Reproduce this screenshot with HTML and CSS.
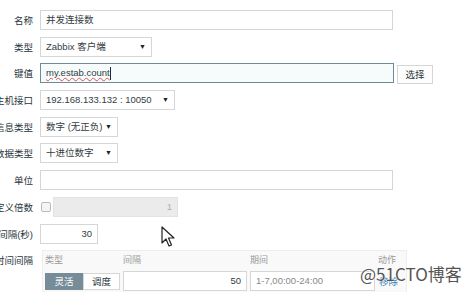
FILE: index.html
```html
<!DOCTYPE html>
<html lang="zh-CN">
<head>
  <meta charset="UTF-8">
  <title>监控项</title>
  <link rel="stylesheet" href="styles.css">
</head>
<body>
  <div class="form">
    <div class="row">
      <div class="label"><span>名称</span></div>
      <div class="input w-full">并发连接数</div>
    </div>
    <div class="row">
      <div class="label"><span>类型</span></div>
      <div class="input select w-type">Zabbix 客户端<span class="arrow">▼</span></div>
    </div>
    <div class="row">
      <div class="label"><span>键值</span></div>
      <div class="input focused w-key"><span class="typo">my.estab.count</span><span class="caret"></span></div>
      <div class="btn">选择</div>
    </div>
    <div class="row">
      <div class="label"><span>主机接口</span></div>
      <div class="input select w-host">192.168.133.132 : 10050<span class="arrow">▼</span></div>
    </div>
    <div class="row">
      <div class="label"><span>信息类型</span></div>
      <div class="input select w-small">数字 (无正负)<span class="arrow">▼</span></div>
    </div>
    <div class="row">
      <div class="label"><span>数据类型</span></div>
      <div class="input select w-small">十进位数字<span class="arrow">▼</span></div>
    </div>
    <div class="row">
      <div class="label"><span>单位</span></div>
      <div class="input w-full"></div>
    </div>
    <div class="row">
      <div class="label"><span>自定义倍数</span></div>
      <div class="checkbox"></div>
      <div class="input disabled w-mult">1</div>
    </div>
    <div class="row">
      <div class="label"><span>更新间隔(秒)</span></div>
      <div class="input num w-int">30</div>
    </div>
    <div class="row top">
      <div class="label"><span>自定义时间间隔</span></div>
      <div class="intervals">
        <div class="int-head">
          <span class="col-type">类型</span>
          <span class="col-int">间隔</span>
          <span class="col-period">期间</span>
          <span class="col-act">动作</span>
        </div>
        <div class="int-row">
          <div class="toggle">
            <span class="on">灵活</span><span>调度</span>
          </div>
          <div class="input num w-iv">50</div>
          <div class="input w-period">1-7,00:00-24:00</div>
          <a class="remove">移除</a>
        </div>
      </div>
    </div>
  </div>

  <svg class="pointer" width="14" height="22" viewBox="0 0 14 22">
    <path d="M1 1 L1 17 L5 13 L8 20 L10.5 19 L7.5 12 L13 12 Z" fill="#fff" stroke="#222" stroke-width="1.2" stroke-linejoin="round"/>
  </svg>
  <div class="watermark">@51CTO博客</div>
</body>
</html>
```

FILE: styles.css
```css
/* Item form */
body {
  margin: 0;
  background: #fff;
  font-family: "Liberation Sans", "Noto Sans CJK SC", sans-serif;
  font-size: 9.5px;
  color: #2a353b;
  overflow: hidden;
}

.form {
  padding-top: 10px;
  display: flex;
  flex-direction: column;
  gap: 6.7px;
}

.row {
  display: flex;
  align-items: center;
  height: 20px;
}

.row.top {
  align-items: flex-start;
  height: auto;
}

.label {
  width: 33px;
  margin-right: 7px;
  display: flex;
  justify-content: flex-end;
  white-space: nowrap;
  flex-shrink: 0;
}

.row.top .label {
  padding-top: 3px;
}

.input {
  box-sizing: border-box;
  height: 20px;
  border: 1px solid #d4d6d8;
  background: #fff;
  padding: 0 5px;
  line-height: 18px;
  white-space: nowrap;
  position: relative;
  color: #333d42;
}

.select {
  padding-right: 18px;
}

.arrow {
  position: absolute;
  right: 5px;
  top: 0;
  font-size: 7px;
  color: #222;
}

.focused {
  border-color: #6d8b98;
  background: #f6fbfc;
  display: flex;
  align-items: center;
}

.typo {
  text-decoration: underline wavy #e05050;
  text-decoration-thickness: 1px;
}

.caret {
  display: inline-block;
  width: 1px;
  height: 13px;
  background: #1f2c33;
}

.btn {
  box-sizing: border-box;
  margin-left: 3px;
  margin-top: 3px;
  width: 36px;
  height: 19px;
  border: 1px solid #d4d6d8;
  background: #fdfdfd;
  text-align: center;
  line-height: 17px;
}

.num {
  text-align: right;
}

.disabled {
  background: #ebebeb;
  border-color: #e2e2e2;
  color: #b0b0b0;
  text-align: right;
}

.checkbox {
  box-sizing: border-box;
  width: 10px;
  height: 10px;
  margin: 0 2px 0 1px;
  border: 1px solid #b8bcbf;
  border-radius: 2px;
  background: #f4f4f4;
}

.w-full { width: 353px; }
.w-type { width: 112px; }
.w-key { width: 354px; }
.w-host { width: 135px; }
.w-small { width: 78px; }
.w-mult { width: 125px; }
.w-int { width: 58px; }
.w-iv { width: 124px; }
.w-period { width: 125px; color: #888; }

/* Custom intervals table */
.intervals {
  margin-left: 2px;
  width: 361px;
  background: #f9f9f9;
  border: 1px solid #eeeeee;
  border-bottom: none;
  padding: 0 0 4px 2px;
}

.int-head {
  display: flex;
  height: 20px;
  line-height: 18px;
  color: #9a9a9a;
  font-size: 9px;
}

.col-type { width: 78px; }
.col-int { width: 127px; }
.col-period { width: 128px; }

.int-row {
  display: flex;
  align-items: center;
  gap: 3px;
}

.toggle {
  display: flex;
}

.toggle span {
  box-sizing: border-box;
  width: 37px;
  height: 17px;
  line-height: 15px;
  text-align: center;
  border: 1px solid #d4d6d8;
  background: #fff;
}

.toggle span.on {
  width: 38px;
  background: #768c98;
  border-color: #768c98;
  color: #fff;
}

.remove {
  color: #2b7bb9;
  margin-left: 1px;
}

/* Overlays */
.pointer {
  position: absolute;
  left: 161px;
  top: 226px;
}

.watermark {
  position: absolute;
  left: 360px;
  top: 261px;
  font-family: "Noto Sans CJK SC", sans-serif;
  font-size: 17px;
  color: #555;
  text-shadow: 0 0 2px #fff, 0 0 2px #fff;
}
```
